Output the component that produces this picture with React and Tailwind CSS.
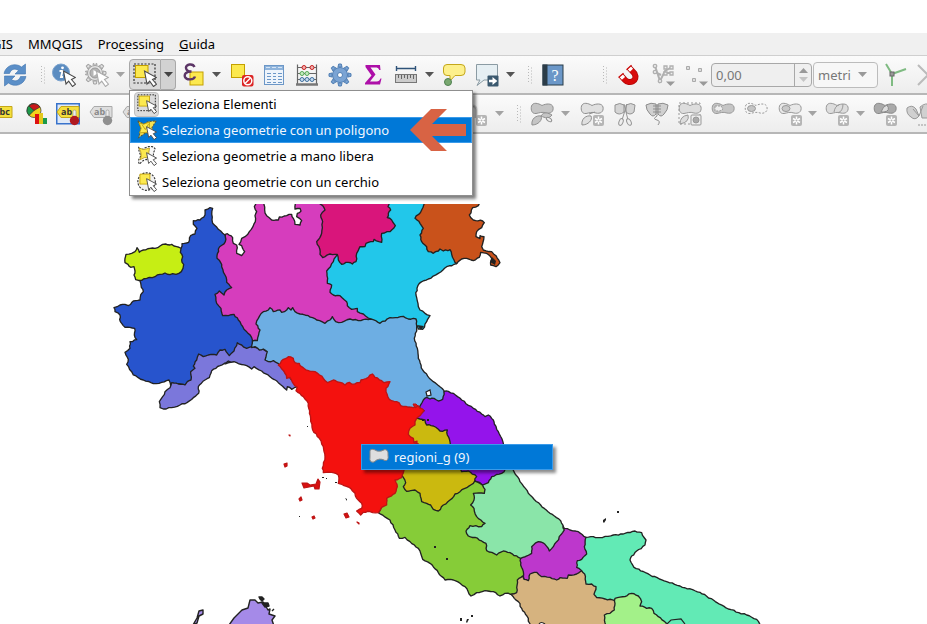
import React from "react";

const NORTH = [
  ["#2754cd", "243,160 246,146 266,142 272,122 285,117 291,100 280,88 280,77 300,75 315,60 315,45 330,38 338,40 336,75 338,85 355,103 375,120 400,150 400,300 420,360 470,420 454,470 400,500 296,520 270,568 250,570 232,566 212,572 207,555 185,562 160,566 130,555 100,540 95,530 80,508 85,493 75,472 90,460 90,440 110,434 103,420 104,400 75,397 61,380 60,360 45,350 42,338 60,330 75,328 85,332 100,318 120,315 122,300 130,290 123,270 120,258 120,200 200,180"],
  ["#c6ee14", "78,178 95,175 105,170 111,158 118,172 130,165 150,160 165,160 180,153 197,147 210,150 215,148 222,153 230,155 243,160 241,172 248,185 245,195 251,208 249,220 244,230 228,238 218,236 210,239 195,234 180,238 165,245 140,250 125,256 107,254 102,240 105,228 102,215 92,217 84,208 75,203 75,190"],
  ["#7b77db", "215,563 210,578 195,590 188,605 178,620 180,638 190,642 215,638 240,630 262,622 280,608 296,595 295,575 315,555 328,548 335,527 360,512 385,498 410,503 440,512 455,522 462,515 485,528 510,545 535,563 560,585 562,575 575,583 592,575 585,560 560,540 540,508 530,480 490,463 470,458 455,455 440,460 425,450 412,443 402,468 388,482 375,463 360,465 350,480 325,480 310,485 296,477 290,495 280,513 285,520 272,530 273,555 262,560 255,570 235,567"],
  ["#d63dbd", "376,118 382,116 398,128 400,145 410,150 410,175 425,182 434,170 425,152 417,148 425,130 435,125 448,110 466,80 465,62 470,50 463,35 470,20 492,20 494,45 500,62 515,75 535,75 538,66 560,62 575,58 580,70 585,88 600,90 605,77 590,65 592,55 603,48 600,40 585,42 587,20 700,20 720,170 760,300 830,380 800,395 600,400 500,400 480,430 470,438 458,438 455,428 432,403 420,380 402,358 385,362 368,362 363,340 350,325 345,298 358,288 372,300 380,285 395,278 380,262 375,240 365,215 362,203 351,190 355,162 376,140"],
  ["#22c7ea", "712,178 700,200 680,228 682,265 695,270 690,292 700,300 720,302 740,320 742,332 755,343 772,340 772,350 790,357 812,372 850,410 900,400 945,382 955,402 968,403 980,380 990,362 975,355 960,345 955,335 948,300 951,280 958,265 985,252 1015,235 1040,215 1070,206 1070,100 1000,20 840,20 750,100"],
  ["#d9157b", "655,20 668,32 675,45 662,60 668,80 665,115 650,140 657,155 660,178 668,188 690,177 712,178 715,195 725,208 745,202 757,207 768,200 770,175 780,155 795,155 798,145 820,140 822,133 845,142 845,115 870,110 886,92 875,75 862,68 865,55 872,45 864,35 870,20"],
  ["#c9521b", "976,20 965,45 945,70 960,85 970,100 960,120 965,140 980,155 985,170 1000,175 1015,168 1020,162 1030,168 1050,164 1055,178 1062,195 1070,206 1085,192 1100,190 1120,197 1138,187 1142,172 1160,175 1175,190 1172,210 1188,215 1200,203 1188,182 1175,170 1150,165 1145,155 1152,125 1140,122 1140,131 1128,125 1130,110 1145,98 1153,83 1148,78 1120,75 1108,60 1118,38 1135,32 1140,20"],
  ["#6daee3", "455,458 457,438 472,437 480,405 468,387 475,370 490,350 505,345 510,338 520,350 540,345 545,352 560,345 565,338 573,345 578,338 585,350 600,357 625,362 650,375 675,385 690,375 697,365 707,380 725,382 750,372 775,377 812,372 840,385 870,368 910,364 925,372 948,372 950,400 943,430 952,460 955,490 968,525 1000,560 1032,587 1040,620 1000,640 960,640 700,620 620,540 540,510 520,497 505,500 495,495 502,470 490,462 478,465 465,455"],
];

const CENTER = [
  ["#9414eb", "552,125 565,124 580,130 605,150 640,175 665,192 675,200 685,195 700,210 703,222 715,245 730,280 740,340 750,370 720,378 710,388 690,390 685,400 672,405 650,395 560,340 500,240 468,208 470,198 492,182 478,172 490,150 500,142 510,147 522,145 535,153 548,148"],
  ["#86cc38", "355,488 390,510 405,540 418,565 435,562 450,575 475,595 488,628 510,640 535,668 555,690 580,690 600,700 615,710 633,738 650,728 675,722 700,725 720,738 735,730 752,733 800,720 820,640 720,560 700,430 660,400 600,370 430,370 400,380 380,440"],
  ["#cbb90f", "450,200 495,210 500,225 520,228 540,243 562,240 562,255 570,275 590,330 605,365 625,363 650,380 640,400 600,425 585,432 570,450 550,465 535,483 520,478 512,465 500,460 485,455 480,430 465,420 440,424 430,410 437,398 425,375 410,350 440,230"],
  ["#f4110e", "55,45 70,28 85,20 100,25 105,38 118,40 125,50 145,62 165,65 185,78 203,98 220,90 240,97 255,105 268,97 275,102 300,98 303,90 318,86 337,72 345,82 365,92 372,98 390,95 378,115 378,125 388,148 410,155 430,170 460,173 475,168 492,182 485,190 470,205 465,215 465,225 450,235 445,253 460,265 462,278 475,282 440,340 425,383 405,390 412,410 405,430 380,445 380,465 365,472 355,488 330,485 310,487 302,495 290,483 305,475 305,460 290,445 285,430 272,415 235,400 235,375 215,367 190,368 187,355 195,320 190,290 178,265 158,240 152,205 145,160 130,140 108,122 112,112 98,98 90,82 80,85 75,70", "#bd1414"],
];

const SOUTH = [
  ["#bd37cc", "343,235 360,240 385,245 408,262 420,330 400,385 240,410 222,388 220,365 212,345 212,325 245,270 330,220"],
  ["#8ae5a9", "98,105 105,118 103,130 70,130 72,150 62,165 72,175 80,200 105,220 95,230 60,227 48,243 55,258 75,262 108,280 110,302 140,315 160,303 180,308 212,325 245,310 245,290 265,275 285,283 298,303 310,290 320,275 343,240 332,212 300,190 272,165 235,130 210,95 192,65 185,40 155,70 125,80 115,98"],
  ["#d6b37f", "183,433 200,428 202,390 218,378 222,388 235,392 240,372 260,367 275,380 300,382 320,390 330,383 352,385 355,375 380,372 398,362 430,372 500,430 510,530 240,530 235,505 215,475 205,455"],
  ["#62eab5", "408,262 430,260 450,263 490,255 520,252 555,243 575,248 588,270 585,285 560,303 545,318 540,330 552,352 600,375 650,395 690,408 750,427 790,450 835,477 890,495 920,508 935,535 560,530 495,452 465,447 440,443 432,433 438,410 425,402 408,402 404,372 395,362 380,352 382,332 395,328 410,312 403,290"],
  ["#a3f189", "495,445 525,440 545,430 565,438 575,455 570,468 590,475 605,475 612,490 625,500 648,518 655,535 467,535 463,495 480,490 493,480 495,460"],
];

/* Subdivides long edges with a small repeatable wobble so borders read as surveyed lines. */
function ragged(points) {
  const list = points.split(" ").map((pair) => pair.split(",").map(Number));
  let out = "";
  list.forEach(([x, y], i) => {
    const [nx, ny] = list[(i + 1) % list.length];
    const length = Math.hypot(nx - x, ny - y);
    const parts = Math.max(1, Math.round(length / 8));
    out += `${i ? "L" : "M"}${x} ${y}`;
    for (let k = 1; k < parts; k += 1) {
      const bx = x + ((nx - x) * k) / parts;
      const by = y + ((ny - y) * k) / parts;
      const seed = Math.sin(bx * 12.9898 + by * 78.233) * 43758.5453;
      const wobble = (seed - Math.floor(seed) - 0.5) * 4;
      out += `L${(bx - ((ny - y) / length) * wobble).toFixed(1)} ${(by + ((nx - x) / length) * wobble).toFixed(1)}`;
    }
  });
  return `${out}Z`;
}

function Regions({ shapes, x, y }) {
  return (
    <g transform={`translate(${x} ${y}) scale(0.33333)`} strokeWidth="4" strokeLinejoin="round">
      {shapes.map(([fill, points, stroke = "#222"]) => (
        <path key={fill} d={ragged(points)} fill={fill} stroke={stroke} />
      ))}
    </g>
  );
}

function ItalyMap() {
  return (
    <svg className="block h-[420px] w-full" viewBox="0 204 927 420" preserveAspectRatio="xMinYMin slice" role="img" aria-label="Regioni">
      <Regions shapes={NORTH} x={100} y={195} />
      <path d="M490 262l2 -5l4 4l-1 4z" fill="#222" />
      <path d="M417 325l7 1l-3 4z" fill="#222" />
      <Regions shapes={CENTER} x={260} y={350} />
      <Regions shapes={SOUTH} x={450} y={450} />
      <path d="M426 392l4 -2l1 5l-4 1z" fill="#fff" stroke="#222" strokeWidth="1.2" />
      <path d="M413 404l3 0l2 2l-3 2z" fill="#d81616" stroke="#bd1414" />
      <path d="M667 624l4 -4l10 -1l4 5" fill="#62eab5" stroke="#222" strokeWidth="1.2" />
      <path d="M539 624q2 -3 6 0" fill="#fff" stroke="#222" strokeWidth="1.2" />
      <g fill="#d81010" stroke="#bd1414" strokeWidth="1.2" strokeLinejoin="round">
        <path d="M302 483l5 0l3 2l6 -1l2 -5l2 3l-1 7l-4 0l-1 -3l-10 2z" />
        <path d="M284 464l3 -1l0 3l-2 1zM299 499l2 -2l1 3l-2 1zM312 517l2 -1l1 2l-2 1zM344 514l3 -1l2 4l-3 1zM357 522l2 1l0 1zM289 435l1 0l0 1zM414 442l3 -1l0 2z" />
      </g>
      <g fill="#222">
        <path d="M322 477h2v1h-2zM326 478h1v1h-1zM335 482h2v1h-2zM345 498l2 1l0 2zM299 516h1v1h-1zM307 426h1v1h-1zM434 546h2v2h-2zM446 558h2v2h-2zM427 419h2v2h-2zM422 420h2v1h-2z" />
        <path d="M603 520l3 -2l0 2l-2 3l-1 -1zM617 511h2v2h-2zM460 618h2v3h-2zM466 622l1 -3l2 0l-2 4zM471 615h2v2h-2z" />
      </g>
      <g strokeLinejoin="round" stroke="#222" strokeWidth="1.4">
        <path d="M229 625l5 -7l8 -8l6 -2l2 -8l5 0l3 3l5 -1l2 3l3 5l2 -1l-1 5l6 2l-3 4l2 6z" fill="#a58ae8" />
        <path d="M193 625l4 -7l2 -7l4 -1l0 4l-4 2l-2 7z" fill="#a58ae8" />
        <path d="M259 597l3 0l2 2l-2 2l-2 -2zM262 603l6 0l1 3l-4 1zM272 611l2 -2" fill="#222" />
      </g>
    </svg>
  );
}

const Pointer = ({ faint }) => (
  <path d="M11.500 8L14 21L16.700 18.200L20.500 23.500L23.500 21.200L19.500 16.500L23.500 14.500Z" fill="#fff" stroke={faint ? "#aaa" : "#4a4a4a"} strokeWidth="1.100" />
);
const Star = () => (
  <g>
    <rect x="13" y="13" width="11" height="11" rx="2" fill="#b5b5b5" />
    <path d="M18.500 14.500v8M15 16.500l7 4M22 16.500l-7 4" stroke="#fff" strokeWidth="1.500" />
    <circle cx="18.500" cy="18.500" r="1" fill="#b5b5b5" />
  </g>
);
const bone = "M1.500 4C3 0 8 1 12 3.500C16 1.500 22 1 23 5C24 10 20 12 16 11C12 9.500 9 11 6 11.500C2 12 .5 8 1.500 4Z";

const TAG = "M1 10L5 4.500H23V15.500H5Z";
const Spiky = ({ fill, stroke, r = 9 }) => (
  <g fill={fill} stroke={stroke} strokeWidth="1">
    {[0, 45, 90, 135, 180, 225, 270, 315].map((a) => (
      <path key={a} d={`M10 4L10.700 ${12 - r - 2}H13.300L14 4Z`} transform={`rotate(${a} 12 12)`} />
    ))}
    <circle cx="12" cy="12" r={r - 1.500} />
    <circle cx="12" cy="12" r="2.500" fill="#fff" />
  </g>
);

const ARROW = "M1 10.500C3 1.500 13 -.5 18.500 4L22.500 1V11H12L15.500 7.500C12 5 8 6 6.500 10.500Z";

const ICONS = {
  refresh: (
    <g fill="#5b8fc8" stroke="#3f74ae" strokeWidth=".6">
      <path d={ARROW} />
      <path d={ARROW} transform="rotate(180 12 12)" />
    </g>
  ),
  info: (
    <g>
      <circle cx="9" cy="9.500" r="8.500" fill="#5b8cc0" stroke="#7aa2cd" />
      <circle cx="10.500" cy="4.800" r="1.400" fill="#fff" />
      <path d="M7.500 8h3l-1.500 6h2" stroke="#fff" strokeWidth="1.900" fill="none" />
      <Pointer />
    </g>
  ),
  action: (
    <g>
      <g transform="translate(-2 -2)">
        <Spiky fill="#e2e2e2" stroke="#a2a2a2" />
        <circle cx="12" cy="12" r="5" fill="#b5b5b5" stroke="#999" />
        <path d="M10.500 9L15 12L10.500 15Z" fill="#fff" />
      </g>
      <Pointer faint />
    </g>
  ),
  select: (
    <g>
      <rect x="1" y="1" width="21" height="19" fill="none" stroke="#333" strokeWidth="1.200" strokeDasharray="2 1.500" />
      <rect x="2.500" y="2.500" width="12.500" height="12" fill="#fce94f" stroke="#c4a000" />
      <Pointer />
    </g>
  ),
  selectPolygon: (
    <g>
      <path d="M1 1L8 5L13 2L23 1L18 9L20 20L11 15L2 21L5 11Z" fill="#f5e253" stroke="#5f5a35" strokeWidth="1.300" strokeDasharray="2.500 1.500" />
      <path d="M2.500 3.500L8 5L15 2.500L14.500 14.500L3 15.500L5 10Z" fill="#fce94f" stroke="#b8970c" />
      <path d="M6 5.500l4 6l4 -7" stroke="#b8970c" fill="none" />
      <Pointer />
    </g>
  ),
  selectFree: (
    <g>
      <path d="M2 2Q6 6 10 2Q19 -2 22 4Q18 9 21 14Q19 20 14 16Q7 16 3 22Q0 17 5 12Q2 7 2 2Z" fill="#f8f8f8" stroke="#333" strokeWidth="1.300" strokeDasharray="2.500 1.500" />
      <path d="M2.500 2.500Q8 6 15 2.500Q13 8 15.500 14.500Q9 12 3.500 16.500Q7 10 2.500 2.500Z" fill="#fce94f" stroke="#b8970c" />
      <Pointer />
    </g>
  ),
  selectCircle: (
    <g>
      <circle cx="11.500" cy="11.500" r="10.500" fill="#f0f0f0" stroke="#333" strokeWidth="1.300" strokeDasharray="2.500 1.500" />
      <path d="M3.500 2.500H15.500V14.500H3.500Z" fill="#fce94f" stroke="#c4a000" />
      <Pointer />
    </g>
  ),
  expression: (
    <g>
      <rect x="8" y="9" width="13" height="13" fill="#fce94f" stroke="#c4a000" />
      <path d="M12.500 4C11 0 3.500 1 4 5C4.300 8 7 8.500 9.500 8.500C4 8.500 2 11 3 14C4.500 17.500 12 17 13 13.500" fill="none" stroke="#5c3566" strokeWidth="2.400" />
    </g>
  ),
  deselect: (
    <g>
      <rect x="1.500" y="1.500" width="13" height="13" fill="#fce94f" stroke="#c4a000" />
      <rect x="12" y="12" width="11.500" height="11.500" rx="2" fill="#dc2525" />
      <circle cx="17.800" cy="17.800" r="4" fill="none" stroke="#fff" strokeWidth="1.500" />
      <path d="M15 20.500L20.500 15" stroke="#fff" strokeWidth="1.500" />
    </g>
  ),
  table: (
    <g>
      <rect x="2.500" y="2.500" width="19" height="19" fill="#eef4fb" stroke="#6c97c7" />
      <path d="M3 3h18v4H3z" fill="#8fb4dc" />
      <path d="M4 4.500h16" stroke="#d6e5f5" strokeDasharray="4 2" />
      <path d="M5 10.500h4M11 10.500h3M16 10.500h4M5 13.500h4M11 13.500h3M16 13.500h4M5 16.500h4M11 16.500h3M16 16.500h4M5 19.500h4M11 19.500h3M16 19.500h4" stroke="#6c97c7" />
    </g>
  ),
  abacus: (
    <g fill="none">
      <path d="M2.500 1.500V22M21.500 1.500V22M2 4.500H22M2 10.500H22M2 16.500H22" stroke="#666" strokeWidth="1.200" />
      <path d="M1 21.500H23" stroke="#777" strokeWidth="2.500" />
      <g fill="#f3b0b0" stroke="#c82020"><circle cx="9" cy="4.500" r="2" /><circle cx="17" cy="4.500" r="2" /></g>
      <g fill="#c4ecc0" stroke="#58a858"><circle cx="7" cy="10.500" r="2" /><circle cx="12" cy="10.500" r="2" /></g>
      <g fill="#c5daf0" stroke="#3f719f"><circle cx="7" cy="16.500" r="2" /><circle cx="12" cy="16.500" r="2" /><circle cx="17" cy="16.500" r="2" /></g>
    </g>
  ),
  gear: <Spiky fill="#7ba4d4" stroke="#5280b5" />,
  sigma: <path d="M4.500 2H19L19.500 7H18.200C17.500 5 16.500 4.500 14 4.500H9.500L14.500 11.500L9 18.500H15.500C18 18.500 18.500 17.500 19.500 15.500H20.500L19 21.500H4V20L10.500 12.500L4.500 4Z" fill="#ad0fa8" />,
  ruler: (
    <g>
      <path d="M2 5.500H22M2.500 3V8M21.500 3V8" stroke="#2f5379" strokeWidth="1.400" />
      <rect x="1.500" y="11.500" width="21" height="8" fill="#ccc" stroke="#777" />
      <path d="M4.500 12v3M7.500 12v4M10.500 12v3M13.500 12v4M16.500 12v3M19.500 12v4" stroke="#666" />
    </g>
  ),
  bubble: (
    <g>
      <path d="M5 1.500H19Q23 1.500 23 5V9Q23 12.500 19 12.500H13L8 18L8 12.500H5Q1.500 12.500 1.500 9V5Q1.500 1.500 5 1.500Z" fill="#fdf08c" stroke="#c4a71a" />
      <circle cx="6" cy="19" r="3.500" fill="#79a870" stroke="#4f8050" />
    </g>
  ),
  callout: (
    <g>
      <path d="M1.500 1.500H22.500V17H9L2 22.500L5 17H1.500Z" fill="#e6eff3" stroke="#8b9ba3" />
      <rect x="12.500" y="12.500" width="11" height="11" rx="1" fill="#3b596f" />
      <path d="M14 16.700H17.500V14L22.300 18L17.500 22V19.300H14Z" fill="#fff" />
    </g>
  ),
  magnet: (
    <g fill="none">
      <path d="M5 12.500L9 17C13 21.500 22.500 18 18.500 10.500L13 4.500" stroke="#b30808" strokeWidth="6" />
      <path d="M5 12.500L9 17C13 21.500 22.500 18 18.500 10.500L13 4.500" stroke="#d80a0a" strokeWidth="4.500" />
      <path d="M5 12.500L7.500 15.300M13 4.500L15.500 7.200" stroke="#fff" strokeWidth="4.200" />
      <path d="M2.500 14.500L7.500 10.200M10.500 6.700L15.500 2.200" stroke="#cc0a0a" strokeWidth="1.200" />
    </g>
  ),
  topology: (
    <g fill="#eee" stroke="#b0b0b0" strokeWidth="1.300">
      <path d="M3 3L8 18L13 8L20 4M3 9L9 12M13 10H20" fill="none" strokeWidth="2" />
      <circle cx="3" cy="3" r="1.700" /><circle cx="3" cy="9" r="1.700" /><circle cx="8" cy="18" r="1.700" />
      <path d="M12 3h3v3h-3zM18 3h3v3h-3zM12 9h3v3h-3zM18 9h3v3h-3z" />
      <path d="M14 18.500H23L18.500 23Z" fill="#999" stroke="none" />
    </g>
  ),
  vertices: (
    <g fill="#ddd" stroke="#aaa">
      <path d="M1.500 3.500h3v3h-3zM7.500 15.500h3v3h-3zM13.500 5.500h3v3h-3z" />
      <path d="M14 18.500H23L18.500 23Z" fill="#999" stroke="none" />
    </g>
  ),
  axes: (
    <g fill="none">
      <path d="M8 11L2 1M8 11L22 6M8 11V23" stroke="#7fbb82" strokeWidth="2" />
      <rect x="6" y="9" width="4" height="4" fill="#999" stroke="#666" />
    </g>
  ),
  cross: <path d="M3 2L13 12L3 22M13 12L24 2M13 12L24 22" fill="none" stroke="#bbb" strokeWidth="2" />,
  diagram: (
    <g stroke="#333" strokeWidth=".7">
      <circle cx="9" cy="8.500" r="7" fill="#f2d31d" />
      <path d="M9 8.500V1.500A7 7 0 0 0 4 13.500Z" fill="#1b9a4a" />
      <path d="M9 8.500L4 4A7 7 0 0 1 15 5Z" fill="#c81919" />
      <path d="M10 12h4v10h-4z" fill="#d11" stroke="none" /><path d="M14 11h4v11h-4z" fill="#e3c81c" stroke="none" /><path d="M18 16h4v6h-4z" fill="#1b9a4a" stroke="none" />
    </g>
  ),
  node: (
    <g>
      <path d="M0 4H8Q12 4 12 8V16" fill="none" stroke="#ccc" strokeWidth="3" />
      <path d="M0 4H8Q12 4 12 8V16" fill="none" stroke="#aaa" />
      <g transform="translate(-1 0)"><Star /></g>
    </g>
  ),
  move: (
    <g fill="#c5c5c5" stroke="#909090">
      <path d={bone} />
      <path d="M2 23C1 17 6 13 11 14C13 18 8 23 2 23ZM11 14C14 9 18 11 22 13C19 17 15 16 11 14Z" />
      <ellipse cx="19" cy="17.500" rx="3" ry="1.700" transform="rotate(35 19 17.500)" fill="#eee" />
    </g>
  ),
  moveStar: (
    <g fill="#e0e0e0" stroke="#909090">
      <path d={bone} />
      <path d="M2 23C1 17 6 13 11 14C13 18 8 23 2 23ZM9 12l6 -2" />
      <g stroke="none"><Star /></g>
    </g>
  ),
  scissors: (
    <g fill="#d5d5d5" stroke="#939393">
      <path d="M2 3Q7 0 11 3V10Q6 14 2 10ZM13 3Q18 0 22 3L21 10Q17 14 13 10Z" />
      <path d="M11 2L15 18M14 2L9 18" />
      <ellipse cx="8" cy="20" rx="2" ry="3.500" transform="rotate(20 8 20)" fill="#eee" />
      <ellipse cx="16" cy="20" rx="2" ry="3.500" transform="rotate(-25 16 20)" fill="#eee" />
    </g>
  ),
  stitch: (
    <g fill="#d0d0d0" stroke="#8d8d8d">
      <path d="M1 3Q6 0 11 2V12Q8 16 5 12Q1 8 1 3ZM13 2Q18 0 23 3Q23 8 19 12Q16 16 13 12Z" />
      <path d="M8 4h8M8 7h8M8 10h8M12 2V14Q7 17 12 18Q16 19 13 23" fill="none" />
    </g>
  ),
  offset: (
    <g fill="#ddd" stroke="#999">
      <rect x="1" y="1" width="21" height="21" fill="none" strokeDasharray="2 2" />
      <path d={bone} /><path d="M2 22Q2 14 10 13Q12 20 2 22Z" />
      <rect x="13" y="13" width="10" height="10" rx="1" fill="#eee" /><circle cx="18" cy="18" r="3" fill="#aaa" />
    </g>
  ),
  ring: <g stroke="#999"><path d={bone} fill="#c5c5c5" /><path d="M4 4h6l2 3l-3 2H4z" fill="#eee" strokeDasharray="2 1" /></g>,
  hollow: <g stroke="#999"><path d={bone} fill="none" strokeDasharray="2 1.500" /><ellipse cx="7.500" cy="6.500" rx="4" ry="3" fill="#c5c5c5" /></g>,
  ringStar: <g><path d={bone} fill="#e8e8e8" stroke="#999" /><ellipse cx="8" cy="6.500" rx="4" ry="3" fill="#c9c9c9" stroke="#999" /><Star /></g>,
  splitStar: <g><path d={bone} fill="#ddd" stroke="#999" /><path d="M9 10Q10 4 14 3M13 11Q18 9 18 2" fill="none" stroke="#999" /><Star /></g>,
  mergeStar: <g><path d={bone} fill="#aaa" stroke="#888" /><path d="M8 10Q10 4 14 3Q18 9 11 10Z" fill="#ddd" stroke="#888" /><Star /></g>,
  warp: <g fill="#d0d0d0" stroke="#999"><path d="M1 6Q6 2 10 7L13 14Q9 19 5 15Q0 12 1 6ZM14 5Q20 0 24 3V16H16Z" /><path d="M7 7L13 14L17 4" fill="none" /><path d="M12 23h12" strokeDasharray="2 1" /></g>,
};

function Icon({ name }) {
  return <svg className="block h-6 w-6 shrink-0" viewBox="0 0 24 24" aria-hidden="true">{ICONS[name]}</svg>;
}

function Tool({ icon, label, className = "" }) {
  return (
    <button type="button" aria-label={label} className={`shrink-0 ${className}`}>
      <Icon name={icon} />
    </button>
  );
}

function Caret({ className = "", dark = false, label = "Altre opzioni" }) {
  return (
    <button type="button" aria-label={label} className={`shrink-0 ${className}`}>
      <svg className="block h-[5px] w-[9px]" viewBox="0 0 9 5"><path d="M0 0H9L4.500 5Z" fill={dark ? "#555" : "#a3a3a3"} /></svg>
    </button>
  );
}

function Handle({ className = "" }) {
  return (
    <svg className={`block h-[18px] w-1.5 shrink-0 ${className}`} viewBox="0 0 6 18" aria-hidden="true">
      <path d="M1.500 0V18M4.500 1.500V18" stroke="#b9b9b9" strokeDasharray="1 2" />
    </svg>
  );
}

function LabelTag({ text, tone = "yellow", pin, framed, className = "" }) {
  const yellow = tone === "yellow";
  return (
    <button type="button" aria-label={`Etichetta ${text}`} className={`shrink-0 ${className}`}>
      <svg className="block h-6 w-6" viewBox="0 0 24 24">
        {framed && <rect x=".75" y="1.750" width="22.500" height="20" fill="#dfe9f6" stroke="#3873cc" strokeWidth="1.500" />}
        <path d={TAG} fill={yellow ? "#f5df3c" : "#dedede"} stroke={yellow ? "#c4a71a" : "#aaa"} />
        <text x="5" y="13" fontSize="9" fontWeight="bold" fontFamily="Open Sans, sans-serif" fill={yellow ? "#333" : "#888"}>{text}</text>
        {pin && (
          <g>
            <rect x="17" y="8" width="3" height="8" rx="1.500" fill="#eee" stroke="#999" strokeWidth=".7" />
            <circle cx="18.500" cy="18.500" r="4.700" fill={pin} />
          </g>
        )}
      </svg>
    </button>
  );
}

const MODES = [
  { icon: "select", label: "Seleziona Elementi" },
  { icon: "selectPolygon", label: "Seleziona geometrie con un poligono" },
  { icon: "selectFree", label: "Seleziona geometrie a mano libera" },
  { icon: "selectCircle", label: "Seleziona geometrie con un cerchio" },
];

function SelectionMenu() {
  return (
    <div role="menu" className="absolute left-0 top-full z-20 flex w-[344px] flex-col border border-[#8f8f8f] bg-white shadow-[3px_3px_3px_rgba(0,0,0,0.5)]">
      {MODES.map(({ icon, label }, i) => (
        <button
          key={icon}
          type="button"
          role="menuitem"
          className={`flex h-[26px] items-center gap-[3px] border pl-[3px] text-left ${i === 1 ? "border-[#3a9bea] bg-[#0078d7] text-[#f0f6fd]" : "border-transparent text-black"}`}
        >
          <span className={`flex h-[25px] w-[25px] items-center justify-center ${i === 0 ? "rounded-sm border border-[#c0c0c0] bg-[#dcdcdc]" : ""}`}>
            <svg className="h-5 w-5" viewBox="0 0 24 24" aria-hidden="true">{ICONS[icon]}</svg>
          </span>
          {label}
        </button>
      ))}
      <svg className="absolute left-[280px] top-[18px] h-[42px] w-14" viewBox="0 0 56 42" aria-hidden="true">
        <path d="M0 21L21 0H37L22 15H56V27H22L37 42H21Z" fill="#d86344" />
      </svg>
    </div>
  );
}

const toolbar = "flex h-[39px] items-center border-b-2 border-[#b7b7b7] bg-linear-to-b from-[#fbfbfb] to-[#ededed]";

export default function App() {
  return (
    <div className="w-full overflow-hidden bg-white pt-[33px] font-['Noto_Sans','Open_Sans',sans-serif] text-[13px] leading-[18px] text-black">
      <nav className="flex h-[23px] items-center gap-[15px] border-b border-[#cfcfcf] bg-[#f0f0f0]">
        <button type="button" className="flex w-[13px] justify-end">GIS</button>
        <button type="button">MMQGIS</button>
        <button type="button">Pro<u>c</u>essing</button>
        <button type="button"><u>G</u>uida</button>
      </nav>

      <div className={toolbar}>
        <Tool icon="refresh" label="Aggiorna" className="ml-[3px]" />
        <Handle className="ml-[13px]" />
        <Tool icon="info" label="Informazioni elementi" className="ml-1.5" />
        <Tool icon="action" label="Esegui azione" className="ml-[9px]" />
        <Caret className="ml-[7px]" />
        <div className="relative ml-1 flex h-[31px] shrink-0">
          <button type="button" aria-label="Seleziona" className="flex w-8 items-center justify-center rounded-l-sm border border-[#a8a8a8] bg-[#dadada]"><Icon name="select" /></button>
          <button type="button" aria-label="Modi di selezione" className="flex w-[15px] items-center justify-center rounded-r-sm border border-l-0 border-[#a8a8a8] bg-[#d2d2d2]">
            <svg className="h-[5px] w-[9px]" viewBox="0 0 9 5"><path d="M0 0H9L4.500 5Z" fill="#444" /></svg>
          </button>
          <SelectionMenu />
        </div>
        <Tool icon="expression" label="Seleziona con espressione" className="ml-1.5" />
        <Caret dark className="ml-1.5" />
        <Tool icon="deselect" label="Deseleziona" className="ml-[9px]" />
        <Tool icon="table" label="Tabella attributi" className="ml-2" />
        <Tool icon="abacus" label="Calcolatore campi" className="ml-[9px]" />
        <Tool icon="gear" label="Strumenti" className="ml-[9px]" />
        <Tool icon="sigma" label="Statistiche" className="ml-[9px]" />
        <Tool icon="ruler" label="Misura" className="ml-[9px]" />
        <Caret dark className="ml-[7px]" />
        <Tool icon="bubble" label="Suggerimenti mappa" className="ml-2" />
        <Tool icon="callout" label="Annotazione" className="ml-[9px]" />
        <Caret dark className="ml-[7px]" />
        <Handle className="ml-3" />
        <button type="button" aria-label="Guida" className="ml-2 shrink-0">
          <svg className="block h-6 w-6" viewBox="0 0 24 24">
            <rect x="2" y="2" width="20" height="20" fill="#6b97c8" stroke="#2b3c48" />
            <path d="M1.500 1.500h5v21h-5z" fill="#2b3c48" />
            <text x="10.500" y="18" fontSize="16" fontFamily="Liberation Serif, serif" fill="#fff">?</text>
          </svg>
        </button>
        <Handle className="ml-[37px]" />
        <Tool icon="magnet" label="Aggancio" className="ml-2" />
        <Tool icon="topology" label="Tutti i vettori" className="ml-3" />
        <Tool icon="vertices" label="Vertice" className="ml-[9px]" />
        <div className="ml-0.5 flex h-6 w-[101px] shrink-0 rounded-sm border border-[#a8a8a8] bg-[#efefef]">
          <input aria-label="Tolleranza" defaultValue="0,00" className="w-[83px] border-r border-[#a8a8a8] bg-transparent pl-1 text-[#777] outline-none" />
          <div className="flex flex-1 flex-col items-center justify-center gap-1">
            <button type="button" aria-label="Aumenta"><svg className="block h-[5px] w-[9px]" viewBox="0 0 9 5"><path d="M0 5H9L4.500 0Z" fill="#999" /></svg></button>
            <button type="button" aria-label="Diminuisci"><svg className="block h-[5px] w-[9px]" viewBox="0 0 9 5"><path d="M0 0H9L4.500 5Z" fill="#c4c4c4" /></svg></button>
          </div>
        </div>
        <div className="relative ml-px flex h-[26px] w-[65px] shrink-0 items-center rounded-sm border border-[#bcbcbc] bg-[#f7f7f7]">
          <select aria-label="Unità" className="h-full w-full appearance-none bg-transparent pl-1 text-[#777] outline-none"><option>metri</option></select>
          <svg className="pointer-events-none absolute right-2.5 h-[5px] w-[9px]" viewBox="0 0 9 5"><path d="M0 0H9L4.500 5Z" fill="#999" /></svg>
        </div>
        <Tool icon="axes" label="Modifica topologica" className="ml-1.5" />
        <Tool icon="cross" label="Intersezioni" className="ml-[7px]" />
      </div>

      <div className={toolbar}>
        <LabelTag text="abc" className="-ml-[11px]" />
        <Tool icon="diagram" label="Diagrammi" className="ml-3" />
        <LabelTag text="ab" framed pin="#b01820" className="ml-[7px]" />
        <LabelTag text="ab" tone="gray" pin="#8f8f8f" className="ml-[9px]" />
        <LabelTag text="ab" tone="gray" className="ml-[9px]" />
        <Tool icon="node" label="Aggiungi curva" className="ml-[318px]" />
        <Caret className="ml-[7px]" />
        <Handle className="ml-3" />
        <Tool icon="move" label="Sposta elemento" className="ml-2" />
        <Caret className="ml-[7px]" />
        <Tool icon="moveStar" label="Copia e sposta" className="ml-2.5" />
        <Tool icon="scissors" label="Dividi elementi" className="ml-[9px]" />
        <Tool icon="stitch" label="Unisci elementi" className="ml-2" />
        <Tool icon="offset" label="Offset" className="ml-[9px]" />
        <Tool icon="ring" label="Aggiungi anello" className="ml-[9px]" />
        <Tool icon="hollow" label="Elimina anello" className="ml-[9px]" />
        <Tool icon="ringStar" label="Riempi anello" className="ml-2.5" />
        <Caret className="ml-1.5" />
        <Tool icon="splitStar" label="Dividi parti" className="ml-2" />
        <Caret className="ml-[7px]" />
        <Tool icon="mergeStar" label="Fondi attributi" className="ml-2" />
        <Tool icon="warp" label="Ruota simboli" className="ml-[9px]" />
      </div>

      <main className="relative pt-[70px]">
        <ItalyMap />
        <button type="button" className="absolute left-[361px] top-[310px] flex h-[26px] w-[192px] items-center gap-[5px] border border-[#3a9bea] bg-[#0078d7] pl-[7px] text-[#f0f6fd] shadow-[3px_3px_3px_rgba(0,0,0,0.45)]">
          <svg className="h-5 w-5" viewBox="0 0 20 20" aria-hidden="true">
            <path d="M1 3.500Q3 1 8 4Q12 5 16 2.500Q19.500 3 19 8Q20 14 16 13.500Q10 10 5 15Q0 16 1 10Z" fill="#dedede" stroke="#888" />
          </svg>
          regioni_g (9)
        </button>
      </main>
    </div>
  );
}
